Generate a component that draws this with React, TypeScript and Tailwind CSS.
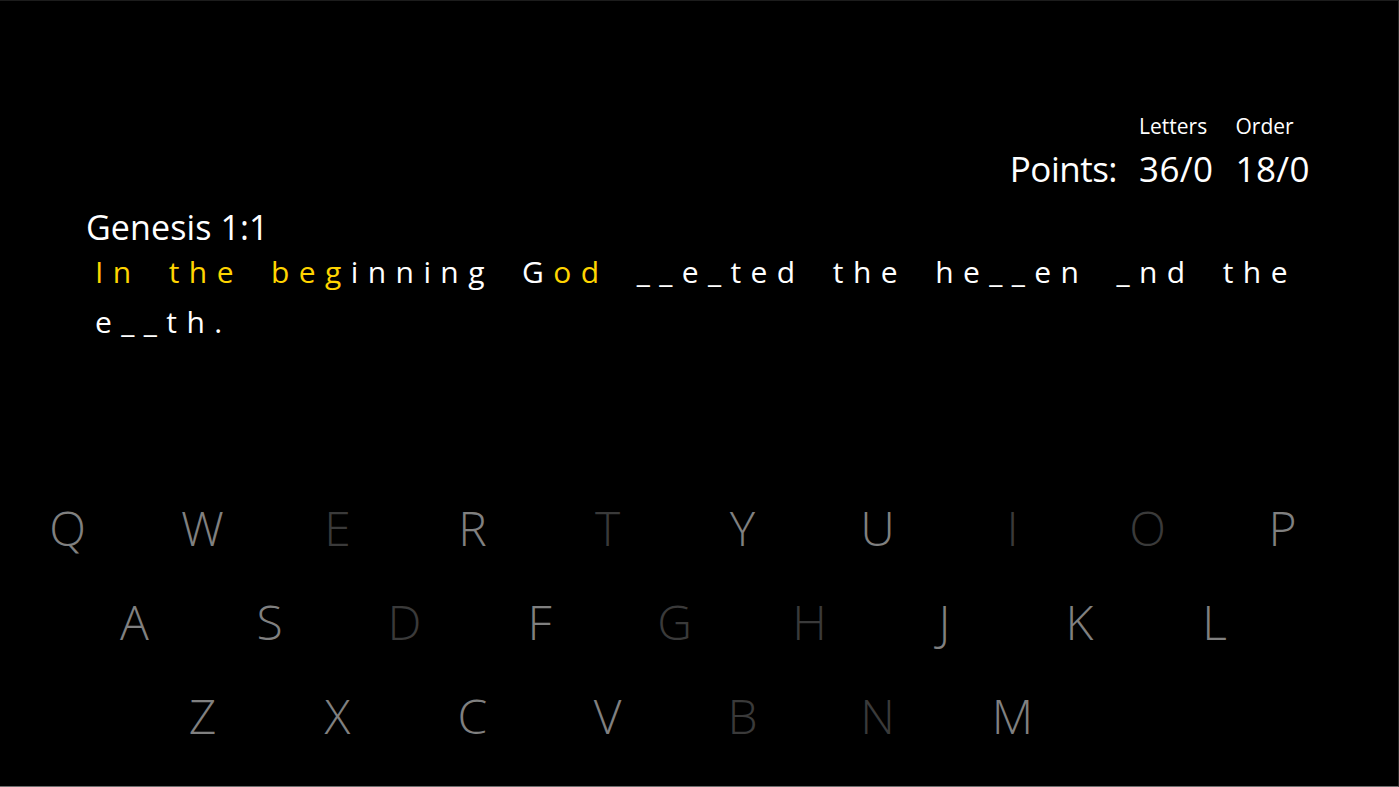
import React from "react";

// letters that are still in play stay lit; the others are dimmed
const rows: string[][] = [
  ["Q", "W", "E", "R", "T", "Y", "U", "I", "O", "P"],
  ["A", "S", "D", "F", "G", "H", "J", "K", "L"],
  ["Z", "X", "C", "V", "B", "N", "M"],
];
const used = new Set(["E", "T", "I", "O", "D", "G", "H", "B", "N"]);

// [text, found]
const verse: [string, boolean][] = [
  ["In the be", true],
  ["g", true],
  ["inning G", false],
  ["od", true],
  [" __e_ted the he__en _nd the e__th.", false],
];

const Key = ({ letter }: { letter: string }) => (
  <div
    className={
      "w-[135px] text-center text-[48px] leading-[94px] font-light " +
      (used.has(letter) ? "text-[#3a3a3a]" : "text-[#808080]")
    }
  >
    {letter}
  </div>
);

export default function App() {
  return (
    <div className="h-[787px] w-full bg-black overflow-hidden border-t border-t-[#1c1c1c] border-r border-r-[#2a2a2a] border-b border-b-[#6e6e6e] font-['Open_Sans',sans-serif] text-white">
      {/* score */}
      <div className="flex justify-end pr-[88px] pt-[111px]">
        <div className="grid grid-cols-[auto_auto_auto] gap-x-[22px]">
          <div />
          <div className="text-[21px] leading-[28px]">Letters</div>
          <div className="text-[21px] leading-[28px]">Order</div>
          <div className="mt-[7px] text-[35px] leading-[44px] tracking-[-0.5px]">Points:</div>
          <div className="mt-[7px] text-[35px] leading-[44px] tracking-[0.4px]">36/0</div>
          <div className="mt-[7px] text-[35px] leading-[44px] tracking-[0.4px]">18/0</div>
        </div>
      </div>

      {/* verse */}
      <div className="pl-[86px] mt-[16px] text-[34px] leading-[40px] tracking-[0.1px]">
        Genesis 1:1
      </div>
      <p className="pl-[95px] w-[1360px] text-[30px] leading-[50px] tracking-[9.4px] [word-spacing:11px]">
        {verse.map(([t, found], i) => (
          <span key={i} className={found ? "text-[#ffd400]" : "text-white"}>
            {t}
          </span>
        ))}
      </p>

      {/* keyboard */}
      <div className="mt-[134px] flex flex-col">
        {rows.map((row, r) => (
          <div
            key={r}
            className={
              "flex " + (r === 1 ? "pl-[67px]" : r === 2 ? "pl-[135px]" : "")
            }
          >
            {row.map((l) => (
              <Key key={l} letter={l} />
            ))}
          </div>
        ))}
      </div>
    </div>
  );
}
